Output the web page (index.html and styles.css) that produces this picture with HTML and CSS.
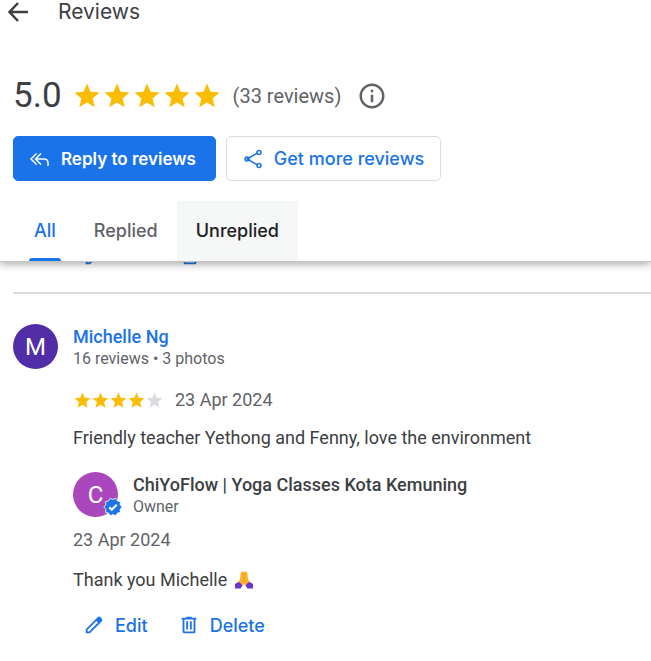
FILE: index.html
```html
<!DOCTYPE html>
<html lang="en">
<head>
    <meta charset="UTF-8">
    <meta name="viewport" content="width=device-width, initial-scale=1.0">
    <title>Reviews</title>
    <link rel="stylesheet" href="styles.css">
</head>
<body>
    <!-- Shared icons -->
    <svg class="icon-defs" aria-hidden="true">
        <symbol id="star" viewBox="0 0 24 24"><path d="M12 17.27L18.18 21l-1.64-7.03L22 9.24l-7.19-.61L12 2 9.19 8.63 2 9.24l5.46 4.73L5.82 21z"/></symbol>
        <symbol id="pencil" viewBox="0 0 24 24">
            <path fill-rule="evenodd" d="M20.4 4.9l-1.3-1.3a2.3 2.3 0 0 0-3.2 0L3 16.5V21h4.5L20.4 8.1a2.3 2.3 0 0 0 0-3.2zM6.7 19H5v-1.700l9.600-9.600 1.700 1.700z"/>
        </symbol>
        <symbol id="trash" viewBox="0 0 24 24">
            <path d="M15 4V3H9v1H4v2h1v13c0 1.100.9 2 2 2h10a2 2 0 0 0 2-2V6h1V4h-5zm2 15H7V6h10v13zM9 8h2v9H9zm4 0h2v9h-2z"/>
        </symbol>
    </svg>

    <header class="header">
        <div class="title-bar">
            <button class="back" aria-label="Back">
                <svg viewBox="0 0 20 20"><path d="M20 10H1.500M10 1L1.500 10l8.500 9"/></svg>
            </button>
            <h1>Reviews</h1>
        </div>

        <div class="rating">
            <span class="score">5.0</span>
            <span class="stars">
                <svg><use href="#star"/></svg>
                <svg><use href="#star"/></svg>
                <svg><use href="#star"/></svg>
                <svg><use href="#star"/></svg>
                <svg><use href="#star"/></svg>
            </span>
            <span class="count">(33 reviews)</span>
            <button class="info" aria-label="Info">
                <svg viewBox="0 0 24 24"><path d="M11 7h2v2h-2zm0 4h2v6h-2zm1-9C6.480 2 2 6.480 2 12s4.480 10 10 10 10-4.480 10-10S17.520 2 12 2zm0 18c-4.410 0-8-3.590-8-8s3.590-8 8-8 8 3.590 8 8-3.590 8-8 8z"/></svg>
            </button>
        </div>

        <div class="buttons">
            <button class="btn btn-primary">
                <svg viewBox="0 0 20 20"><path d="M6.500 4.500L1 10l5.500 5.500M11 4.500L5.500 10l5.500 5.500M5.500 10H14q4 0 4 4v3"/></svg>
                Reply to reviews
            </button>
            <button class="btn btn-outline">
                <svg viewBox="0 0 20 20">
                    <path d="M14.500 4L4 10l10.500 6"/>
                    <circle cx="16" cy="3.500" r="2"/>
                    <circle cx="4" cy="10" r="2"/>
                    <circle cx="16" cy="16.500" r="2"/>
                </svg>
                Get more reviews
            </button>
        </div>

        <nav class="tabs">
            <button class="tab active">All</button>
            <button class="tab">Replied</button>
            <button class="tab hovered">Unreplied</button>
        </nav>
    </header>

    <main>
        <!-- Previous review, scrolled under the header -->
        <div class="actions scrolled">
            <button class="action" aria-label="Edit"><svg><use href="#pencil"/></svg></button>
            <button class="action" aria-label="Delete"><svg><use href="#trash"/></svg></button>
        </div>

        <article class="review">
            <div class="avatar">M</div>
            <div class="content">
                <div class="person">
                    <a class="name" href="#">Michelle Ng</a>
                    <span class="meta">16 reviews • 3 photos</span>
                </div>
                <div class="stars-line">
                    <span class="stars small">
                        <svg><use href="#star"/></svg>
                        <svg><use href="#star"/></svg>
                        <svg><use href="#star"/></svg>
                        <svg><use href="#star"/></svg>
                        <svg class="empty"><use href="#star"/></svg>
                    </span>
                    <span class="date">23 Apr 2024</span>
                </div>
                <p class="text">Friendly teacher Yethong and Fenny, love the environment</p>

                <div class="owner">
                    <div class="avatar owner-avatar">C
                        <svg class="badge" viewBox="0 0 24 24">
                            <path class="seal" d="M23 12l-2.440-2.780.340-3.680-3.610-.820-1.890-3.180L12 3 8.600 1.540 6.710 4.720l-3.610.810.340 3.680L1 12l2.440 2.780-.340 3.690 3.610.820 1.890 3.180L12 21l3.400 1.460 1.890-3.180 3.610-.820-.340-3.680z"/>
                            <path class="check" d="M7.500 12.200l3 3 6-6"/>
                        </svg>
                    </div>
                    <div class="person">
                        <span class="name">ChiYoFlow | Yoga Classes Kota Kemuning</span>
                        <span class="meta">Owner</span>
                    </div>
                </div>
                <p class="date">23 Apr 2024</p>
                <p class="text reply">Thank you Michelle
                    <svg class="hands" viewBox="0 0 18 18" role="img" aria-label="Folded hands">
                        <path fill="#fcb32b" d="M8.800 1C7.300 0 5.900.8 5.600 2.500L5 8l-2 4 4 3.500 2-2.500 2 2.500 4-3.500-2-4-.600-5.500C12.100.8 10.700 0 9.200 1z"/>
                        <path fill="#e88b18" d="M8.700 2h.6v9l-.3 1.500-.3-1.500z"/>
                        <path fill="#6b35d4" d="M0 13l3.200-2c2 .4 3.800 2 4 4l-1.700 2.500H0zM18 13l-3.200-2c-2 .4-3.800 2-4 4l1.700 2.500H18z"/>
                    </svg>
                </p>
                <div class="actions">
                    <button class="action"><svg><use href="#pencil"/></svg>Edit</button>
                    <button class="action"><svg><use href="#trash"/></svg>Delete</button>
                </div>
            </div>
        </article>
    </main>
</body>
</html>
```

FILE: styles.css
```css
* {
    box-sizing: border-box;
}

body {
    font-family: Roboto, "Liberation Sans", sans-serif;
    font-size: 18px;
    line-height: 24px;
    margin: 0;
    background-color: #fff;
    color: #3c4043;
    overflow: hidden;
}

button {
    font-family: Inter, sans-serif;
    font-size: 18px;
    font-weight: 500;
    margin: 0;
    padding: 0;
    border: none;
    background: none;
    cursor: pointer;
}

svg {
    display: block;
    flex-shrink: 0;
    fill: currentColor;
}

p {
    margin: 0;
}

.icon-defs {
    display: none;
}

/* Header */
.header {
    position: relative;
    z-index: 1;
    background-color: #fff;
    border-bottom: 1px solid #c4c6c6;
    box-shadow: 0 2px 8px rgba(0, 0, 0, 0.35);
}

.title-bar {
    display: flex;
    align-items: center;
    gap: 30px;
    height: 24px;
    padding-left: 8px;
}

.title-bar h1 {
    margin: 0;
    font-family: Inter, sans-serif;
    font-size: 21px;
    font-weight: 400;
}

.back svg {
    width: 20px;
    height: 20px;
    fill: none;
    stroke: #3c4043;
    stroke-width: 2.5;
}

.rating {
    display: flex;
    align-items: center;
    height: 40px;
    margin-top: 52px;
    padding-left: 13px;
}

.score {
    font-size: 35px;
    margin-right: 10px;
}

.stars {
    display: flex;
    color: #fbbc04;
}

.stars svg {
    width: 30px;
    height: 30px;
}

.count {
    margin-left: 11px;
    font-size: 20px;
    color: #5f6368;
}

.info {
    margin-left: 16px;
    color: #5f6368;
}

.info svg {
    width: 30px;
    height: 30px;
}

.buttons {
    display: flex;
    gap: 10px;
    padding: 20px 13px;
}

.btn {
    display: flex;
    align-items: center;
    gap: 11px;
    height: 45px;
    padding: 0 16px;
    border: 1px solid #dadce0;
    border-radius: 5px;
}

.btn svg {
    width: 20px;
    height: 20px;
    fill: none;
    stroke: currentColor;
    stroke-width: 1.5;
}

.btn-primary {
    padding-right: 19px;
    background-color: #1a73e8;
    border-color: #1a73e8;
    color: #fff;
    font-size: 17px;
    font-weight: 600;
}

.btn-outline {
    color: #1a73e8;
}

.tabs {
    display: flex;
    padding-left: 15px;
}

.tab {
    position: relative;
    height: 60px;
    padding: 0 19px 2px;
    color: #5f6368;
}

.tab.active {
    color: #1a73e8;
}

.tab.active::after {
    content: '';
    position: absolute;
    left: 14px;
    right: 14px;
    bottom: 0;
    height: 3px;
    border-radius: 3px 3px 0 0;
    background-color: #1a73e8;
}

.tab.hovered {
    background-color: #f6f8f7;
    color: #202124;
}

/* Actions */
.actions {
    display: flex;
    gap: 30px;
    padding-left: 10px;
}

.action {
    display: flex;
    align-items: center;
    gap: 10px;
    color: #1a73e8;
}

.action svg {
    width: 22px;
    height: 22px;
}

.actions.scrolled {
    gap: 74px;
    height: 22px;
    margin-top: -17px;
    padding-left: 83px;
}

/* Review */
.review {
    display: flex;
    gap: 15px;
    margin: 25px 0 0 13px;
    padding-top: 30px;
    border-top: 2px solid #dadce0;
}

.avatar {
    position: relative;
    display: flex;
    flex-shrink: 0;
    align-items: center;
    justify-content: center;
    width: 45px;
    height: 45px;
    border-radius: 50%;
    background-color: #512da8;
    color: #fff;
    font-size: 24px;
}

.owner-avatar {
    background-color: #ab47bc;
}

.badge {
    position: absolute;
    right: -5px;
    bottom: 0;
    width: 20px;
    height: 20px;
}

.badge .seal {
    fill: #1a73e8;
    stroke: #fff;
    stroke-width: 1;
}

.badge .check {
    fill: none;
    stroke: #fff;
    stroke-width: 2.5;
}

.content {
    flex: 1;
}

.person {
    display: flex;
    flex-direction: column;
    align-items: flex-start;
    padding-top: 1px;
}

.name {
    font-weight: 500;
    text-decoration: none;
}

a.name {
    color: #1a73e8;
}

.meta {
    font-size: 16px;
    line-height: 20px;
    color: #5f6368;
}

.stars-line {
    display: flex;
    align-items: center;
    gap: 12px;
    margin: 19px 0 14px;
}

.stars.small svg {
    width: 19px;
    height: 19px;
    margin-right: -1px;
}

.stars .empty {
    color: #dadce0;
}

.date {
    color: #5f6368;
}

.owner {
    display: flex;
    gap: 15px;
    margin: 22px 0 11px;
}

.reply {
    display: flex;
    align-items: center;
    gap: 8px;
    margin: 16px 0 22px;
}

.hands {
    width: 18px;
    height: 18px;
}
```
